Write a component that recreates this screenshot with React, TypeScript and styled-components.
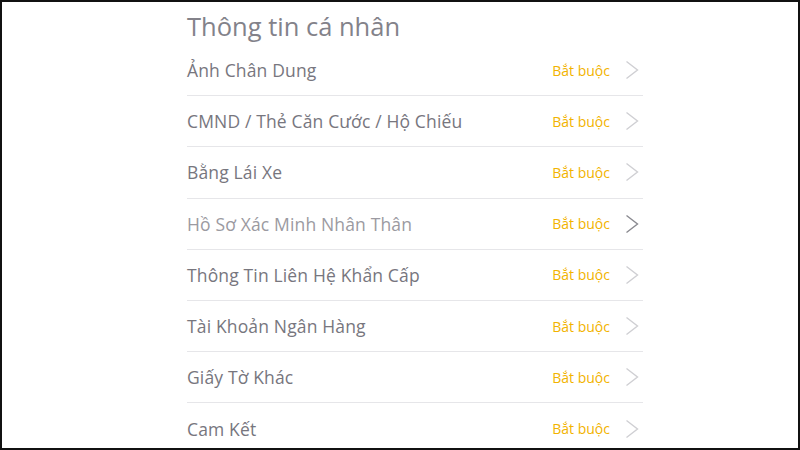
import React from "react";
import styled, { createGlobalStyle } from "styled-components";

const Global = createGlobalStyle`
  html, body { margin: 0; padding: 0; background: #000; }
  body { font-family: "Open Sans", "Noto Sans", sans-serif; }
`;

const Frame = styled.div`
  box-sizing: border-box;
  width: 800px;
  height: 450px;
  border: 2px solid #111;
  background: #fff;
  overflow: hidden;
  display: flex;
  justify-content: flex-start;
`;

const Panel = styled.div`
  width: 456px;
  margin-left: 185px;
  display: flex;
  flex-direction: column;
`;

const Title = styled.h1`
  margin: 0;
  height: 43px;
  flex: none;
  display: flex;
  align-items: center;
  padding-top: 5px;
  box-sizing: border-box;
  font-size: 25.5px;
  font-weight: 400;
  color: #83828a;
  letter-spacing: 0;
`;

const Row = styled.div<{ $last?: boolean }>`
  height: 51.2px;
  flex: none;
  box-sizing: border-box;
  display: flex;
  align-items: center;
  border-bottom: ${(p) => (p.$last ? "none" : "1px solid #e6e6e9")};
`;

const Label = styled.span<{ $muted?: boolean }>`
  flex: 1;
  font-size: 17.5px;
  letter-spacing: 0.15px;
  color: ${(p) => (p.$muted ? "#9b9aa1" : "#77767e")};
`;

const Badge = styled.span`
  font-size: 14px;
  color: #f2b300;
  margin-right: 15px;
`;

const Chevron = styled.svg`
  width: 14px;
  height: 20px;
  margin-right: 4px;
  flex: none;
`;

const items = [
  "Ảnh Chân Dung",
  "CMND / Thẻ Căn Cước / Hộ Chiếu",
  "Bằng Lái Xe",
  "Hồ Sơ Xác Minh Nhân Thân",
  "Thông Tin Liên Hệ Khẩn Cấp",
  "Tài Khoản Ngân Hàng",
  "Giấy Tờ Khác",
  "Cam Kết",
];

export default function App() {
  return (
    <>
      <Global />
      <Frame>
        <Panel>
          <Title>Thông tin cá nhân</Title>
          {items.map((t, i) => (
            <Row key={t} $last={i === items.length - 1}>
              <Label $muted={i === 3}>{t}</Label>
              <Badge>Bắt buộc</Badge>
              <Chevron viewBox="0 0 14 20">
                <path
                  d="M1.5 1.5 L12.5 10 L1.5 18.5"
                  fill="none"
                  stroke={i === 3 ? "#8a8a90" : "#cfcfd3"}
                  strokeWidth="1.4"
                />
              </Chevron>
            </Row>
          ))}
        </Panel>
      </Frame>
    </>
  );
}
